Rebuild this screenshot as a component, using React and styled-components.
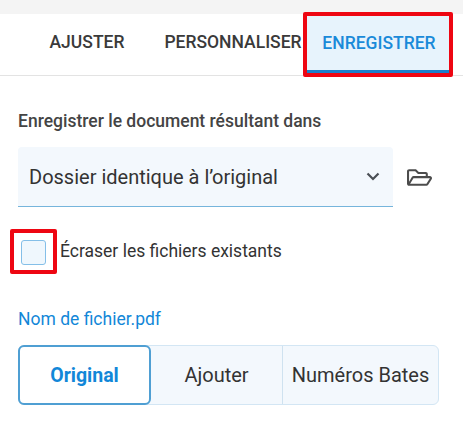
import React from "react";
import styled, { createGlobalStyle } from "styled-components";
import { FaRegFolderOpen } from "react-icons/fa";

const Global = createGlobalStyle`
  html, body { margin: 0; padding: 0; background: #fff; }
  body { font-family: Roboto, "Liberation Sans", sans-serif; color: #333; width: 463px; height: 424px; overflow: hidden; }
`;

const TopStrip = styled.div`
  height: 14px;
  background: #f4f4f4;
`;

const TabBar = styled.div`
  display: flex;
  justify-content: flex-end;
  align-items: flex-start;
  height: 61px;
  padding-right: 12px;
  border-bottom: 1px solid #e3e3e3;
  box-sizing: content-box;
`;

const Tab = styled.div`
  position: relative;
  display: flex;
  align-items: center;
  justify-content: center;
  box-sizing: border-box;
  height: ${(p) => (p.$active ? "59px" : "56px")};
  width: ${(p) => p.$width}px;
  padding-left: ${(p) => (p.$active ? "3px" : "0")};
  padding-top: ${(p) => (p.$active ? "1px" : "0")};
  font-size: 17.5px;
  font-weight: 500;
  white-space: nowrap;
  color: ${(p) => (p.$active ? "#1a8ad9" : "#3a3a3a")};
  background: ${(p) => (p.$active ? "#e7f3fc" : "transparent")};
  border-bottom: ${(p) => (p.$active ? "3px solid #1a7fcb" : "none")};
`;

const RedFrame = styled.span`
  position: absolute;
  inset: ${(p) => p.$inset};
  border: 4px solid #ee0612;
  border-radius: 2px;
  pointer-events: none;
`;

const Content = styled.div`
  padding: 35px 24px 0 18px;
  display: flex;
  flex-direction: column;
`;

const Heading = styled.div`
  font-size: 17.5px;
  font-weight: 500;
  line-height: 20px;
  color: #444;
`;

const SelectRow = styled.div`
  display: flex;
  align-items: center;
  gap: 14px;
  margin-top: 16px;
`;

const Select = styled.div`
  box-sizing: border-box;
  width: 375px;
  height: 60px;
  padding: 0 13px 0 11px;
  display: flex;
  align-items: center;
  justify-content: space-between;
  background: #f3f8fd;
  border-bottom: 1px solid #76b5dc;
  border-radius: 4px 4px 0 0;
  font-size: 20px;
  color: #333;
`;

const CheckRow = styled.div`
  display: flex;
  align-items: center;
  gap: 14px;
  margin-top: 20px;
  padding-left: 3px;
  height: 48px;
  font-size: 17.5px;
  color: #333;
`;

const CheckBox = styled.span`
  position: relative;
  box-sizing: border-box;
  width: 25px;
  height: 25px;
  flex: none;
  margin-top: 3px;
  background: #eff7fd;
  border: 1px solid #84bfe8;
  border-radius: 3px;
`;

const FileLink = styled.div`
  margin-top: 34px;
  font-size: 17.5px;
  line-height: 20px;
  color: #1287d8;
`;

const Segments = styled.div`
  display: flex;
  width: 421px;
  height: 60px;
  margin-top: 16px;
  box-sizing: border-box;
  background: #f3f8fd;
  border: 1px solid #d3e6f4;
  border-radius: 6px;
`;

const Segment = styled.div`
  box-sizing: border-box;
  height: ${(p) => (p.$active ? "60px" : "auto")};
  margin: ${(p) => (p.$active ? "-1px 0 -1px -1px" : "0")};
  width: ${(p) => p.$width}px;
  flex: ${(p) => (p.$grow ? 1 : "none")};
  display: flex;
  align-items: center;
  justify-content: center;
  font-size: ${(p) => (p.$active ? "19.5px" : "20px")};
  white-space: nowrap;
  font-weight: ${(p) => (p.$active ? 700 : 400)};
  color: ${(p) => (p.$active ? "#1287d8" : "#333")};
  background: ${(p) => (p.$active ? "#fff" : "transparent")};
  border: ${(p) => (p.$active ? "2px solid #4f9fd3" : "none")};
  border-radius: ${(p) => (p.$active ? "6px" : "0")};
  border-right: ${(p) => (p.$divider ? "1px solid #cfe2f0" : "")};
`;

const Chevron = () => (
  <svg width="14" height="9" viewBox="0 0 14 9" fill="none">
    <path d="M1.5 1.5L7 7l5.5-5.5" stroke="#4a4f55" strokeWidth="2.2" />
  </svg>
);

const FolderIcon = styled(FaRegFolderOpen)`
  width: 25px;
  height: 25px;
  color: #4c4c4c;
  flex: none;
`;

export default function App() {
  return (
    <>
      <Global />
      <TopStrip />
      <TabBar>
        <Tab $width={150}>AJUSTER</Tab>
        <Tab $width={142}>PERSONNALISER</Tab>
        <Tab $width={147} $active>
          ENREGISTRER
          <RedFrame $inset="-2px -2px -7px -1px" />
        </Tab>
      </TabBar>
      <Content>
        <Heading>Enregistrer le document résultant dans</Heading>
        <SelectRow>
          <Select>
            Dossier identique à l’original
            <Chevron />
          </Select>
          <FolderIcon />
        </SelectRow>
        <CheckRow>
          <CheckBox>
            <RedFrame $inset="-12px -12px -10px -12px" />
          </CheckBox>
          Écraser les fichiers existants
        </CheckRow>
        <FileLink>Nom de fichier.pdf</FileLink>
        <Segments>
          <Segment $active $width={133}>Original</Segment>
          <Segment $width={132} $divider>Ajouter</Segment>
          <Segment $grow>Numéros Bates</Segment>
        </Segments>
      </Content>
    </>
  );
}
